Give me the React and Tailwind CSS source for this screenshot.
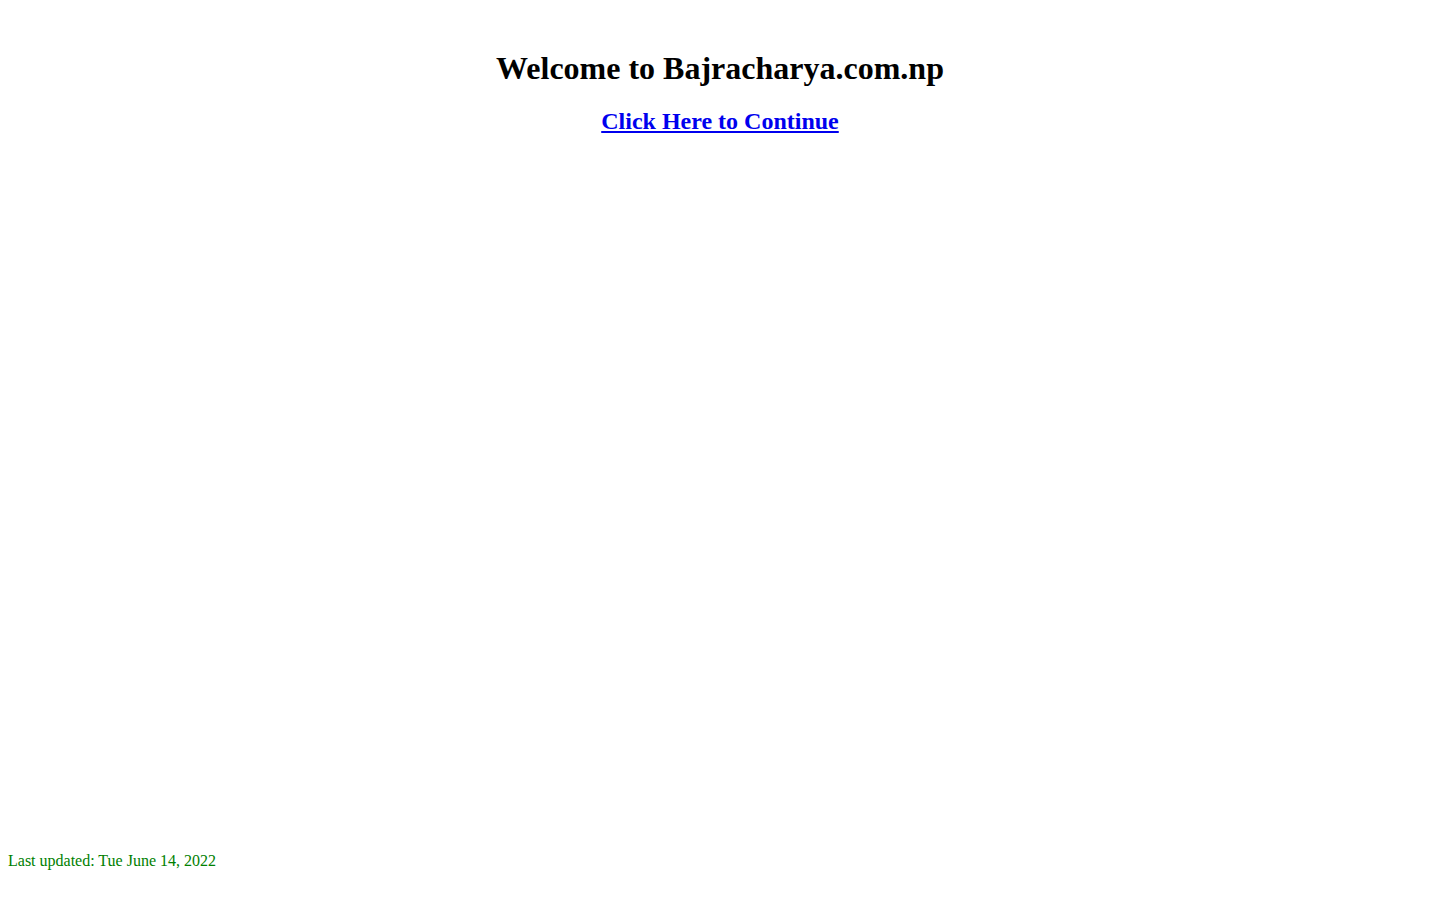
export default function App() {
  return (
    <div className="min-h-[900px] bg-white font-['Liberation_Serif',serif] text-black flex flex-col">
      <div className="pt-[50px] text-center">
        <h1 className="text-[32px] font-bold leading-[37px]">Welcome to Bajracharya.com.np</h1>
        <h2 className="mt-[20px] text-[24px] font-bold leading-[28px]">
          <a href="#" className="text-[#0000ee] underline">Click Here to Continue</a>
        </h2>
      </div>
      <div className="flex-1" />
      <p className="px-2 pb-[30px] text-[16px] leading-[18px] text-[#008000]">Last updated: Tue June 14, 2022</p>
    </div>
  )
}
